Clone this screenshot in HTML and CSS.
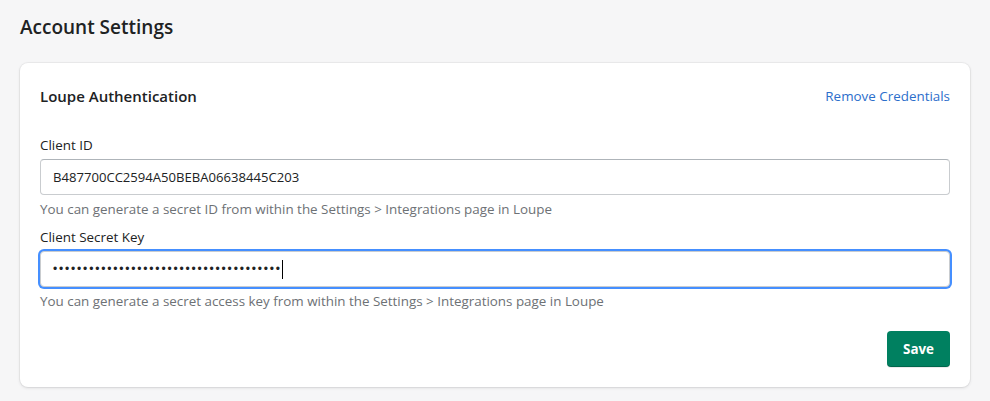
FILE: index.html
```html
<!DOCTYPE html>
<html lang="en">
<head>
<meta charset="utf-8">
<title>Account Settings</title>
<link rel="stylesheet" href="styles.css">
</head>
<body>
<main class="page">
  <h1 class="page-title">Account Settings</h1>
  <section class="card">
    <div class="card-header">
      <h2 class="card-title">Loupe Authentication</h2>
      <a class="link" href="#">Remove Credentials</a>
    </div>
    <div class="field">
      <label class="label" for="client-id">Client ID</label>
      <input class="input" id="client-id" type="text" value="B487700CC2594A50BEBA06638445C203">
      <p class="help">You can generate a secret ID from within the Settings &gt; Integrations page in Loupe</p>
    </div>
    <div class="field">
      <label class="label" for="client-secret">Client Secret Key</label>
      <div class="input input-focused" id="client-secret">
        <span class="dots">••••••••••••••••••••••••••••••••••••••</span><span class="caret"></span>
      </div>
      <p class="help">You can generate a secret access key from within the Settings &gt; Integrations page in Loupe</p>
    </div>
    <div class="actions">
      <button class="btn-primary" type="button">Save</button>
    </div>
  </section>
</main>
</body>
</html>
```
FILE: styles.css
```css
* { box-sizing: border-box; }
html, body { margin: 0; padding: 0; }
body {
  background: #f6f6f7;
  font-family: "Open Sans", "Noto Sans", "Liberation Sans", sans-serif;
  color: #202223;
  font-size: 13.4px;
}
.page {
  padding: 13px 20px 14px;
}
.page-title {
  margin: 0 0 22px;
  font-size: 19px;
  font-weight: 600;
  line-height: 28px;
}
.card {
  background: #fff;
  border-radius: 8px;
  box-shadow: 0 0 0 1px rgba(63,63,68,0.05), 0 1px 3px rgba(63,63,68,0.15);
  padding: 20px;
}
.card-header {
  display: flex;
  justify-content: space-between;
  align-items: center;
  height: 26px;
  margin: 0 0 26px;
}
.card-title {
  margin: 0;
  font-size: 15px;
  font-weight: 600;
}
.link {
  color: #2c6ecb;
  text-decoration: none;
  font-size: 13.4px;
}
.field { display: flex; flex-direction: column; }
.label {
  line-height: 20px;
  margin-bottom: 4px;
  font-size: 13.4px;
}
.input {
  height: 36px;
  border: 1px solid #c9cccf;
  border-top-color: #aeb4b9;
  border-radius: 4px;
  padding: 0 12px;
  font: inherit;
  font-size: 13.1px;
  color: #202223;
  background: #fff;
  outline: none;
  width: 100%;
}
.input-focused {
  display: flex;
  align-items: center;
  box-shadow: 0 0 0 2px #458fff;
  border-color: #c9cccf;
}
.dots {
  letter-spacing: 1.82px;
  font-size: 12px;
  font-family: "Liberation Sans", sans-serif;
}
.caret {
  display: inline-block;
  width: 1px;
  height: 19px;
  background: #000;
}
.help {
  margin: 4px 0 8px;
  line-height: 20px;
  color: #6d7175;
  font-size: 13.4px;
}
.actions {
  display: flex;
  justify-content: flex-end;
  padding-top: 12px;
}
.btn-primary {
  background: #008060;
  color: #fff;
  border: none;
  border-radius: 4px;
  height: 36px;
  padding: 0 16px;
  font: inherit;
  font-size: 13.4px;
  font-weight: 700;
  box-shadow: 0 1px 0 rgba(0,0,0,0.08), inset 0 -1px 0 rgba(0,0,0,0.2);
  cursor: pointer;
}
```
